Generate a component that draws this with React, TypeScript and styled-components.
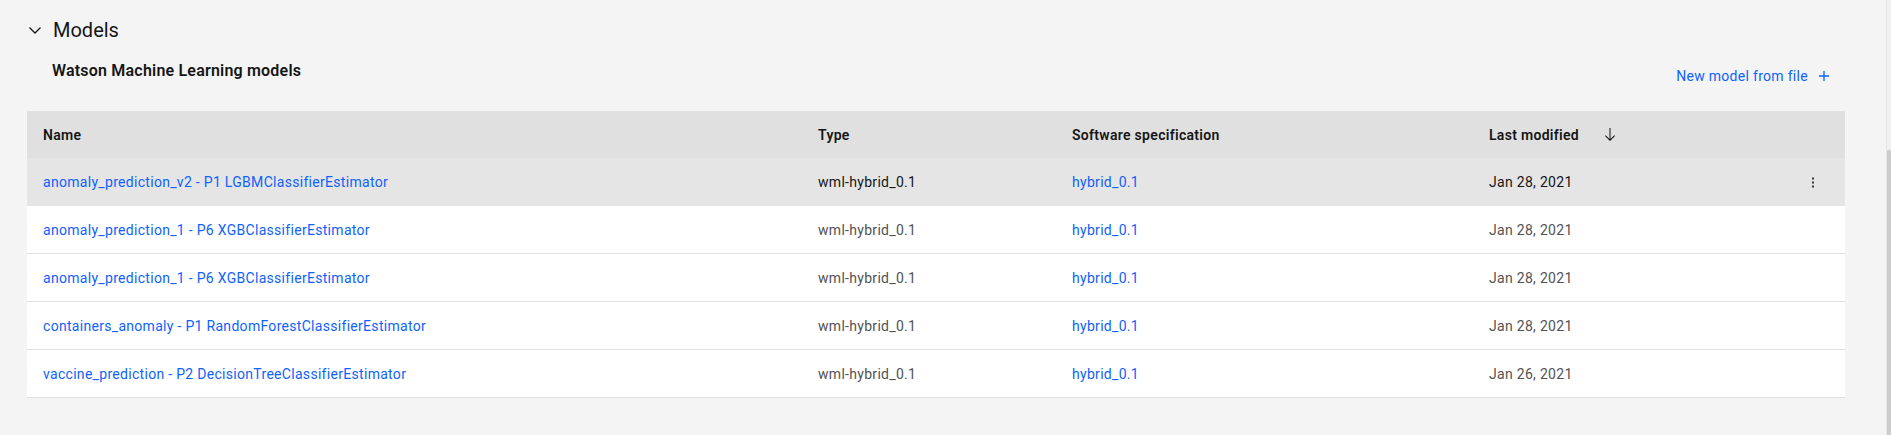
import styled, { createGlobalStyle } from 'styled-components'

const GlobalStyle = createGlobalStyle`
  html, body {
    margin: 0;
    padding: 0;
    background: #f4f4f4;
    font-family: Roboto, "Liberation Sans", sans-serif;
    color: #161616;
    letter-spacing: 0.3px;
  }
`

const Page = styled.div`
  display: flex;
  height: 435px;
  overflow: hidden;
`

const Main = styled.main`
  flex: 1;
  padding: 16px 41px 0 27px;
`

const Scrollbar = styled.div`
  width: 4px;
  padding-top: 150px;
  border-left: 1px solid #e6e6e6;
  background: #f1f1f1;
`

const Thumb = styled.div`
  height: 100%;
  background: #cdcdcd;
`

const SectionHeader = styled.button`
  display: flex;
  align-items: center;
  gap: 10px;
  border: 0;
  background: none;
  padding: 0;
  font: inherit;
  letter-spacing: inherit;
  color: #161616;
  cursor: pointer;
`

const SectionTitle = styled.h2`
  margin: 0;
  font-size: 20px;
  line-height: 28px;
  font-weight: 400;
  letter-spacing: 0;
`

const Toolbar = styled.div`
  display: flex;
  justify-content: space-between;
  align-items: flex-start;
  height: 59px;
  margin-top: 8px;
  padding-left: 25px;
`

const TableTitle = styled.h3`
  margin: 8px 0 0;
  font-size: 16px;
  line-height: 22px;
  font-weight: 600;
  letter-spacing: 0.2px;
`

const GhostButton = styled.button`
  display: flex;
  align-items: center;
  gap: 8px;
  margin-top: 14px;
  padding: 0 13px 0 0;
  border: 0;
  background: none;
  font: inherit;
  letter-spacing: inherit;
  font-size: 14px;
  line-height: 20px;
  color: #0f62fe;
  cursor: pointer;
`

const Table = styled.div`
  display: flex;
  flex-direction: column;
`

const Row = styled.div<{ $head?: boolean; $active?: boolean }>`
  display: grid;
  grid-template-columns: 775px 254px 417px 1fr 64px;
  align-items: center;
  height: 47px;
  background: ${({ $head, $active }) => ($head ? '#e0e0e0' : $active ? '#e5e5e5' : '#ffffff')};
  border-bottom: ${({ $head, $active }) => ($head ? 'none' : `1px solid ${$active ? '#e5e5e5' : '#e0e0e0'}`)};
  color: ${({ $head, $active }) => ($head || $active ? '#161616' : '#525252')};
  font-size: 14px;
  line-height: 18px;
  font-weight: ${({ $head }) => ($head ? 600 : 400)};
`

const Cell = styled.div`
  padding: 0 16px;
  white-space: nowrap;
  display: flex;
  align-items: center;
`

const SortCell = styled(Cell)`
  gap: 23px;
`

const Link = styled.a`
  color: #0f62fe;
  text-decoration: none;
`

const IconCell = styled.div`
  display: flex;
  justify-content: center;
  align-items: center;
`

const Chevron = () => (
  <svg width="16" height="16" viewBox="0 0 16 16" fill="none">
    <path d="M2.5 5.5 8 11l5.5-5.5" stroke="#161616" strokeWidth="1.3" />
  </svg>
)

const Plus = () => (
  <svg width="16" height="16" viewBox="0 0 16 16" fill="none">
    <path d="M8 3v10M3 8h10" stroke="#0f62fe" strokeWidth="1.3" />
  </svg>
)

const ArrowDown = () => (
  <svg width="16" height="16" viewBox="0 0 32 32" fill="#161616">
    <path d="M24.59 16.59L17 24.17V2h-2v22.17l-7.59-7.58L6 18l10 10 10-10-1.41-1.41z" />
  </svg>
)

const Overflow = () => (
  <svg width="16" height="16" viewBox="0 0 16 16" fill="#393939">
    <rect x="7" y="3.5" width="2" height="2" />
    <rect x="7" y="7.5" width="2" height="2" />
    <rect x="7" y="11.5" width="2" height="2" />
  </svg>
)

const models = [
  { name: 'anomaly_prediction_v2 - P1 LGBMClassifierEstimator', date: 'Jan 28, 2021' },
  { name: 'anomaly_prediction_1 - P6 XGBClassifierEstimator', date: 'Jan 28, 2021' },
  { name: 'anomaly_prediction_1 - P6 XGBClassifierEstimator', date: 'Jan 28, 2021' },
  { name: 'containers_anomaly - P1 RandomForestClassifierEstimator', date: 'Jan 28, 2021' },
  { name: 'vaccine_prediction - P2 DecisionTreeClassifierEstimator', date: 'Jan 26, 2021' },
]

export default function App () {
  return (
    <Page>
      <GlobalStyle />
      <Main>
        <SectionHeader>
          <Chevron />
          <SectionTitle>Models</SectionTitle>
        </SectionHeader>

        <Toolbar>
          <TableTitle>Watson Machine Learning models</TableTitle>
          <GhostButton>
            New model from file
            <Plus />
          </GhostButton>
        </Toolbar>

        <Table>
          <Row $head>
            <Cell>Name</Cell>
            <Cell>Type</Cell>
            <Cell>Software specification</Cell>
            <SortCell>
              Last modified
              <ArrowDown />
            </SortCell>
            <IconCell />
          </Row>

          {models.map((m, i) => (
            <Row key={i} $active={i === 0}>
              <Cell><Link href="#">{m.name}</Link></Cell>
              <Cell>wml-hybrid_0.1</Cell>
              <Cell><Link href="#">hybrid_0.1</Link></Cell>
              <Cell>{m.date}</Cell>
              <IconCell>{i === 0 && <Overflow />}</IconCell>
            </Row>
          ))}
        </Table>
      </Main>
      <Scrollbar>
        <Thumb />
      </Scrollbar>
    </Page>
  )
}
